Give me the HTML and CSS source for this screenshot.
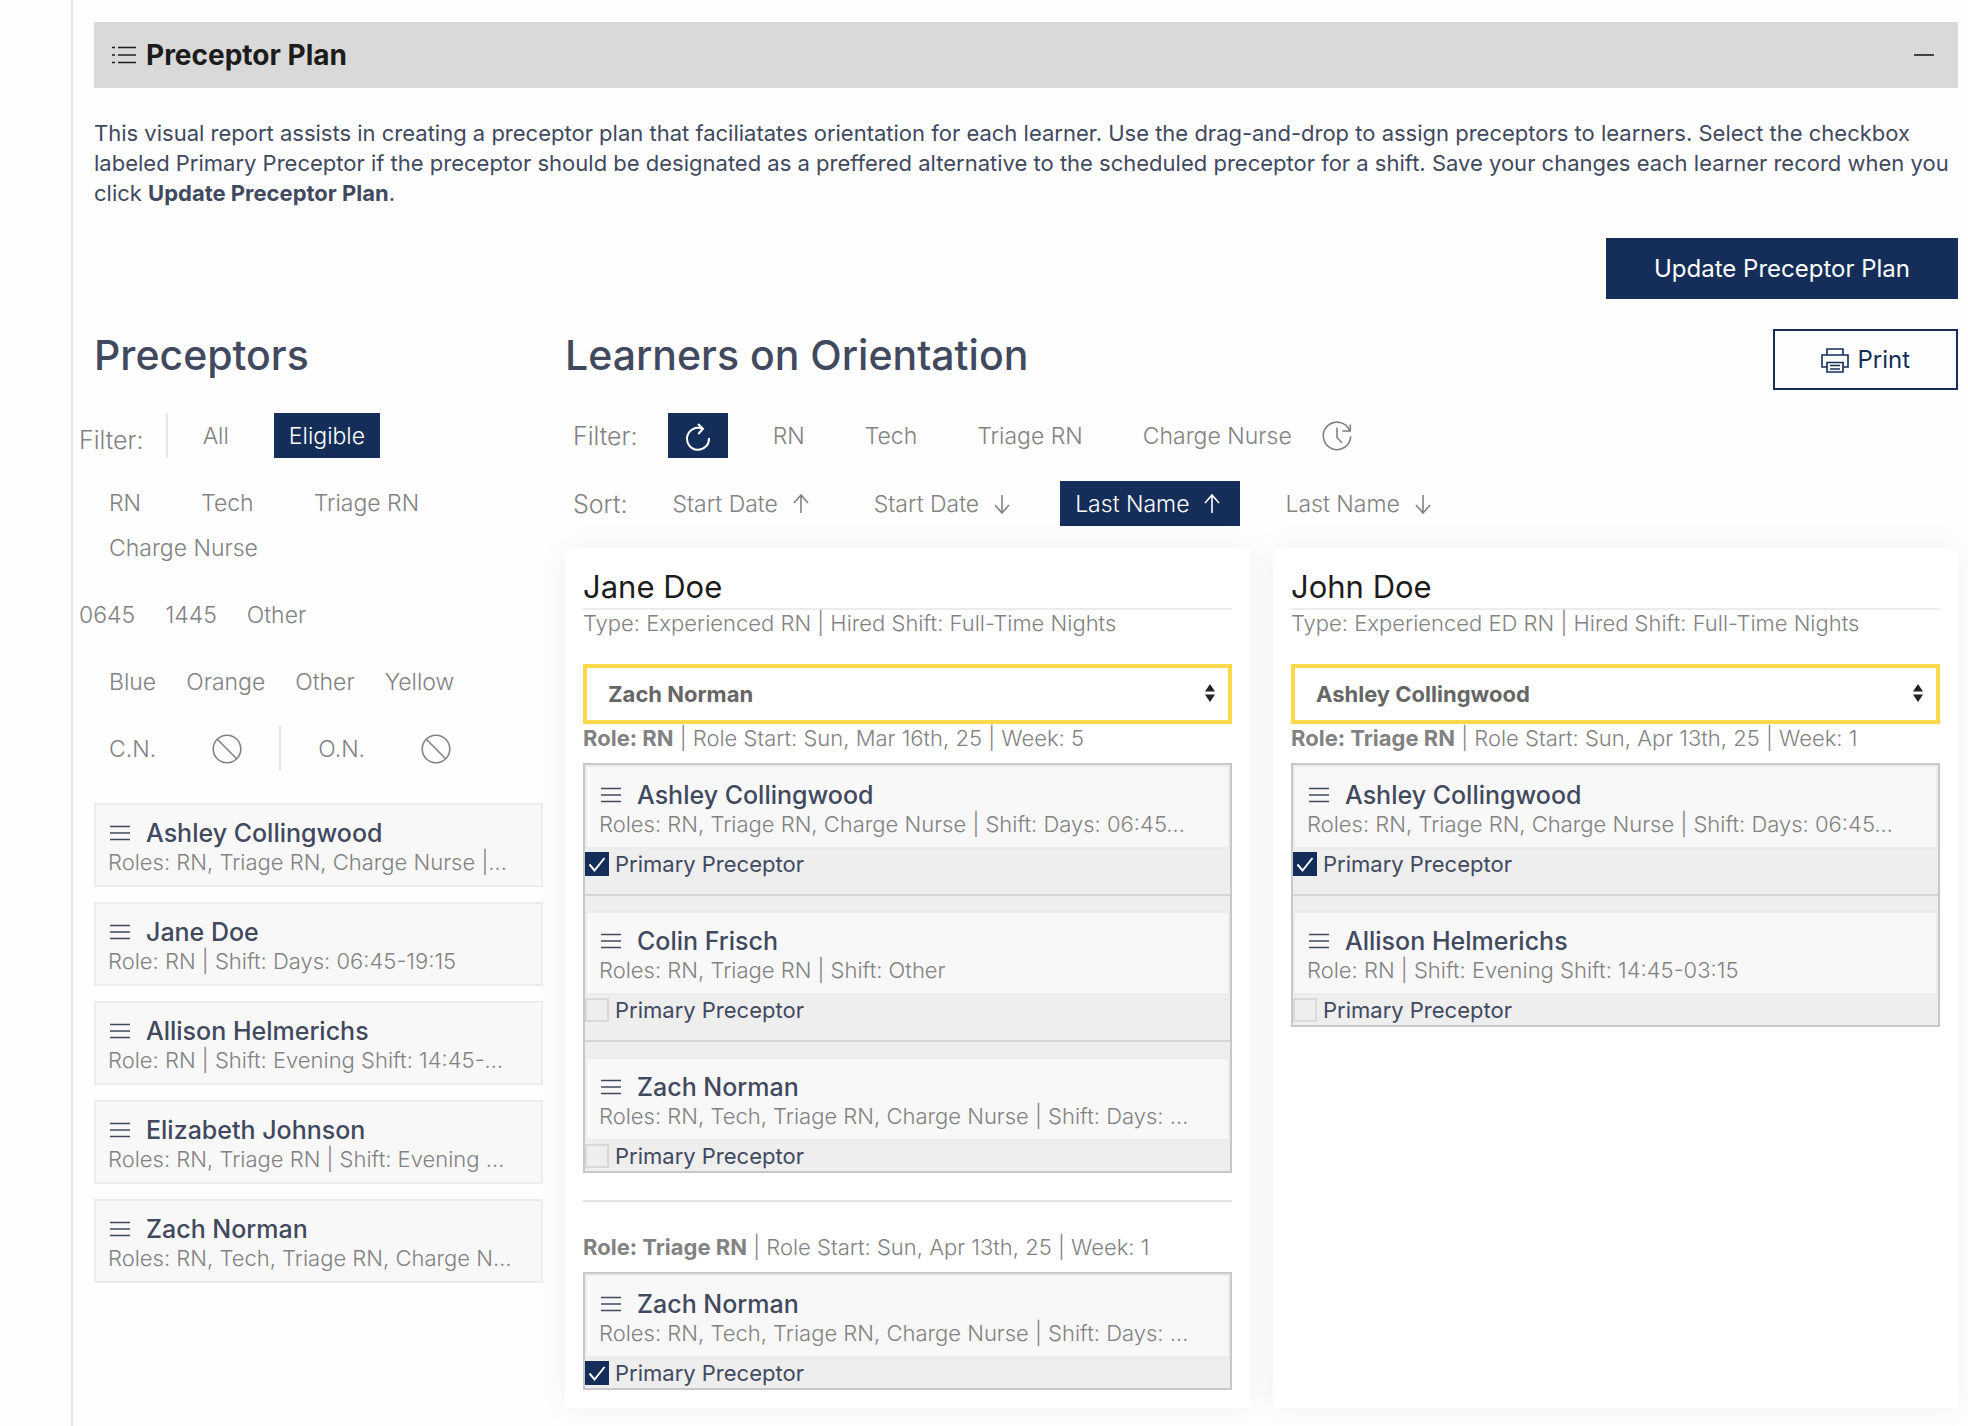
FILE: index.html
```html
<!DOCTYPE html>
<html lang="en">
<head>
<meta charset="utf-8">
<title>Preceptor Plan</title>
<link rel="stylesheet" href="styles.css">
</head>
<body>
<svg class="sprite" aria-hidden="true">
  <symbol id="bars" viewBox="0 0 20 16"><path d="M0 1.5h20M0 8h20M0 14.5h20"/></symbol>
  <symbol id="ban" viewBox="0 0 30 30"><circle cx="15" cy="15" r="13.8"/><path d="M5.3 5.3l19.4 19.4"/></symbol>
  <symbol id="up" viewBox="0 0 26 20"><path d="M13 19V2M6 9l7-8 7 8"/></symbol>
  <symbol id="down" viewBox="0 0 26 20"><path d="M13 1v17M6 11l7 8 7-8"/></symbol>
</svg>
<main class="page">
  <header class="panel-head">
    <h1 class="panel-title">
      <svg class="list-icon" viewBox="0 0 24 18" aria-hidden="true"><path d="M6 1.5h18M6 9h18M6 16.5h18M0 1.5h3M0 9h3M0 16.5h3"/></svg>
      Preceptor Plan
    </h1>
    <button class="collapse" type="button" aria-label="Collapse"><svg viewBox="0 0 20 2" aria-hidden="true"><path d="M0 1h20"/></svg></button>
  </header>

  <p class="intro">This visual report assists in creating a preceptor plan that faciliatates orientation for each learner. Use the drag-and-drop to assign preceptors to learners. Select the checkbox labeled Primary Preceptor if the preceptor should be designated as a preffered alternative to the scheduled preceptor for a shift. Save your changes each learner record when you click <strong>Update Preceptor Plan</strong>.</p>

  <div class="actions"><button class="button solid" type="button">Update Preceptor Plan</button></div>

  <div class="columns">
    <section class="preceptors">
      <h2 class="heading">Preceptors</h2>
      <div class="filters">
        <div class="row spaced">
          <span class="label low">Filter:</span>
          <span class="divider"></span>
          <button class="chip" type="button">All</button>
          <button class="chip active" type="button">Eligible</button>
        </div>
        <div class="row spaced indent">
          <button class="chip" type="button">RN</button>
          <button class="chip" type="button">Tech</button>
          <button class="chip" type="button">Triage RN</button>
          <button class="chip" type="button">Charge Nurse</button>
        </div>
        <div class="row outdent">
          <button class="chip" type="button">0645</button>
          <button class="chip" type="button">1445</button>
          <button class="chip" type="button">Other</button>
        </div>
        <div class="row indent">
          <button class="chip" type="button">Blue</button>
          <button class="chip" type="button">Orange</button>
          <button class="chip" type="button">Other</button>
          <button class="chip" type="button">Yellow</button>
        </div>
        <div class="row flags indent">
          <button class="chip" type="button">C.N.</button>
          <button class="chip" type="button" aria-label="Exclude C.N."><svg class="round-icon"><use href="#ban"/></svg></button>
          <span class="divider mid"></span>
          <button class="chip" type="button">O.N.</button>
          <button class="chip" type="button" aria-label="Exclude O.N."><svg class="round-icon"><use href="#ban"/></svg></button>
        </div>
      </div>
      <ul class="people">
        <li class="person"><h3 class="person-name"><svg class="grip"><use href="#bars"/></svg>Ashley Collingwood</h3><p class="meta">Roles: RN, Triage RN, Charge Nurse |…</p></li>
        <li class="person"><h3 class="person-name"><svg class="grip"><use href="#bars"/></svg>Jane Doe</h3><p class="meta">Role: RN | Shift: Days: 06:45-19:15</p></li>
        <li class="person"><h3 class="person-name"><svg class="grip"><use href="#bars"/></svg>Allison Helmerichs</h3><p class="meta">Role: RN | Shift: Evening Shift: 14:45-…</p></li>
        <li class="person"><h3 class="person-name"><svg class="grip"><use href="#bars"/></svg>Elizabeth Johnson</h3><p class="meta">Roles: RN, Triage RN | Shift: Evening …</p></li>
        <li class="person"><h3 class="person-name"><svg class="grip"><use href="#bars"/></svg>Zach Norman</h3><p class="meta">Roles: RN, Tech, Triage RN, Charge N…</p></li>
      </ul>
    </section>

    <section class="learners">
      <div class="learners-head">
        <h2 class="heading">Learners on Orientation</h2>
        <button class="button outline" type="button">
          <svg class="print-icon" viewBox="0 0 28 26" aria-hidden="true"><path d="M6 8V2h16v6M6 20H1V8h26v12h-5M6 15.500h16V25H6zM9 18.500h10M9 22h10"/></svg>
          Print
        </button>
      </div>
      <div class="row spaced tools">
        <span class="label">Filter:</span>
        <button class="chip active" type="button" aria-label="Reset"><svg class="round-icon bold" viewBox="0 0 30 30" aria-hidden="true"><path d="M19 7.500A11 11 0 1 0 26 17M15 3l5 4.700-4.700 5.300"/></svg></button>
        <button class="chip" type="button">RN</button>
        <button class="chip" type="button">Tech</button>
        <button class="chip" type="button">Triage RN</button>
        <div class="row">
          <button class="chip" type="button">Charge Nurse</button>
          <button class="chip" type="button" aria-label="History"><svg class="round-icon" viewBox="0 0 30 30" aria-hidden="true"><path d="M28.700 15.300A13.700 13.700 0 1 1 27.800 10M28.300 3.500V10h-8M15 6.500v10l5 5.500"/></svg></button>
        </div>
      </div>
      <div class="row spaced tools">
        <span class="label">Sort:</span>
        <button class="chip sort" type="button">Start Date<svg class="arrow"><use href="#up"/></svg></button>
        <button class="chip sort" type="button">Start Date<svg class="arrow"><use href="#down"/></svg></button>
        <button class="chip sort active" type="button">Last Name<svg class="arrow"><use href="#up"/></svg></button>
        <button class="chip sort" type="button">Last Name<svg class="arrow"><use href="#down"/></svg></button>
      </div>

      <div class="cards">
        <article class="card">
          <h3 class="card-title">Jane Doe</h3>
          <p class="meta">Type: Experienced RN | Hired Shift: Full-Time Nights</p>
          <select class="picker" aria-label="Preceptor for Jane Doe"><option>Zach Norman</option></select>
          <p class="meta"><strong>Role: RN</strong> | Role Start: Sun, Mar 16th, 25 | Week: 5</p>
          <ul class="drop">
            <li class="slot"><div class="person"><h4 class="person-name"><svg class="grip"><use href="#bars"/></svg>Ashley Collingwood</h4><p class="meta">Roles: RN, Triage RN, Charge Nurse | Shift: Days: 06:45…</p></div><label class="primary"><input type="checkbox" checked>Primary Preceptor</label></li>
            <li class="slot"><div class="person"><h4 class="person-name"><svg class="grip"><use href="#bars"/></svg>Colin Frisch</h4><p class="meta">Roles: RN, Triage RN | Shift: Other</p></div><label class="primary"><input type="checkbox">Primary Preceptor</label></li>
            <li class="slot"><div class="person"><h4 class="person-name"><svg class="grip"><use href="#bars"/></svg>Zach Norman</h4><p class="meta">Roles: RN, Tech, Triage RN, Charge Nurse | Shift: Days: …</p></div><label class="primary"><input type="checkbox">Primary Preceptor</label></li>
          </ul>
          <hr class="rule">
          <p class="meta"><strong>Role: Triage RN</strong> | Role Start: Sun, Apr 13th, 25 | Week: 1</p>
          <ul class="drop">
            <li class="slot"><div class="person"><h4 class="person-name"><svg class="grip"><use href="#bars"/></svg>Zach Norman</h4><p class="meta">Roles: RN, Tech, Triage RN, Charge Nurse | Shift: Days: …</p></div><label class="primary"><input type="checkbox" checked>Primary Preceptor</label></li>
          </ul>
        </article>
        <article class="card">
          <h3 class="card-title">John Doe</h3>
          <p class="meta">Type: Experienced ED RN | Hired Shift: Full-Time Nights</p>
          <select class="picker" aria-label="Preceptor for John Doe"><option>Ashley Collingwood</option></select>
          <p class="meta"><strong>Role: Triage RN</strong> | Role Start: Sun, Apr 13th, 25 | Week: 1</p>
          <ul class="drop">
            <li class="slot"><div class="person"><h4 class="person-name"><svg class="grip"><use href="#bars"/></svg>Ashley Collingwood</h4><p class="meta">Roles: RN, Triage RN, Charge Nurse | Shift: Days: 06:45…</p></div><label class="primary"><input type="checkbox" checked>Primary Preceptor</label></li>
            <li class="slot"><div class="person"><h4 class="person-name"><svg class="grip"><use href="#bars"/></svg>Allison Helmerichs</h4><p class="meta">Role: RN | Shift: Evening Shift: 14:45-03:15</p></div><label class="primary"><input type="checkbox">Primary Preceptor</label></li>
          </ul>
        </article>
      </div>
    </section>
  </div>
</main>
</body>
</html>
```
FILE: styles.css
```css
:root {
  --navy: #152e59;
  --slate: #41495e;
  --gray: #828282;
  --line: #e6e6e6;
}
* { box-sizing: border-box; }
body {
  margin: 0;
  background: #fefefe;
  color: var(--slate);
  font: 400 22px/30px Inter, "Open Sans", sans-serif;
}
h1, h2, h3, h4, p, ul { margin: 0; padding: 0; }
ul { list-style: none; }
strong { font-weight: 700; }
button, select, input { font: inherit; margin: 0; }
button { cursor: pointer; border: 0; padding: 0; background: none; }
svg { display: block; flex: none; fill: none; stroke: currentColor; stroke-width: 1.6; }
.sprite { display: none; }

.page {
  min-height: 100vh;
  margin-left: 71px;
  padding: 22px 10px 18px 21px;
  border-left: 2px solid var(--line);
}
.panel-head {
  display: flex;
  align-items: center;
  justify-content: space-between;
  height: 66px;
  padding: 0 24px 0 18px;
  background: #d9d9d9;
  color: #1c1c1c;
}
.panel-title { display: flex; align-items: center; gap: 10px; font-size: 28px; font-weight: 700; }
.list-icon { width: 24px; height: 18px; }
.collapse { color: #1c1c1c; }
.collapse svg { width: 20px; height: 2px; }

.intro { margin: 30px 0; }
.actions { display: flex; justify-content: flex-end; margin-bottom: 30px; }
.button {
  display: flex;
  align-items: center;
  justify-content: center;
  gap: 8px;
  height: 61px;
  padding: 0 46px;
  border: 2px solid var(--navy);
  font-size: 24px;
  white-space: nowrap;
}
.solid { background: var(--navy); color: #fff; }
.outline { background: #fefefe; color: var(--navy); }
.print-icon { width: 28px; height: 26px; }

.columns { display: grid; grid-template-columns: 449px minmax(0, 1fr); gap: 22px; }
.heading { height: 61px; font-size: 41px; font-weight: 500; line-height: 52px; }
.learners-head { display: flex; justify-content: space-between; }

.filters { display: grid; gap: 22px; margin: 23px 0 32px -15px; color: var(--gray); }
.row { display: flex; flex-wrap: wrap; align-items: center; }
.spaced { column-gap: 30px; }
.flags { column-gap: 26px; }
.indent { margin-left: 15px; }
.outdent { margin-left: -15px; }
.label { font-size: 25px; font-weight: 300; }
.low { align-self: flex-end; line-height: 36px; }
.divider { width: 2px; height: 45px; margin: 0 -10px 0 -8px; background: var(--line); }
.mid { margin: 0 -4px; }
.chip {
  display: flex;
  align-items: center;
  gap: 10px;
  height: 45px;
  padding: 0 15px;
  color: var(--gray);
  font-size: 23px;
  font-weight: 300;
  white-space: nowrap;
}
.active { background: var(--navy); color: #fff; }
.round-icon { width: 30px; height: 30px; }
.bold { stroke-width: 2; }
.arrow { width: 26px; height: 20px; }
.tools { margin: 23px 0 0 8px; color: var(--gray); }

.people { display: grid; gap: 15px; }
.person {
  height: 84px;
  padding: 13px 12px 0;
  border: 2px solid #ececec;
  background: #f8f8f8;
  overflow: hidden;
}
.person-name { display: flex; align-items: center; gap: 16px; font-size: 25px; font-weight: 500; line-height: 30px; white-space: nowrap; }
.grip { width: 20px; height: 16px; margin-left: 2px; }
.meta { color: var(--gray); font-weight: 300; line-height: 28px; white-space: nowrap; }

.cards { display: grid; grid-template-columns: 1fr 1fr; gap: 23px; margin-top: 22px; }
.card { min-width: 0; padding: 18px; background: #fff; box-shadow: 0 0 30px rgba(0, 0, 0, .06); }
.card-title {
  margin-bottom: -1px;
  border-bottom: 2px solid #ececec;
  color: #1c1c1c;
  font-size: 31px;
  font-weight: 400;
  line-height: 42px;
}
.picker {
  display: block;
  width: 100%;
  height: 60px;
  margin: 27px 0 0;
  padding: 0 21px;
  border: 4px solid #fbd94a;
  border-radius: 0;
  appearance: none;
  color: #666;
  font-weight: 700;
  background: #fff url("data:image/svg+xml,%3Csvg xmlns='http://www.w3.org/2000/svg' width='10' height='18'%3E%3Cpath d='M0 7.500L5 0l5 7.500zM0 10.500h10L5 18z' fill='%23222'/%3E%3C/svg%3E") no-repeat right 13px top 16px;
}
.drop { margin-top: 11px; border: 2px solid #c8c8c8; background: #eee; }
.slot + .slot { margin-top: 15px; padding-top: 15px; border-top: 2px solid #d4d4d4; }
.primary { display: flex; align-items: center; gap: 6px; height: 30px; line-height: 28px; }
.primary input { width: 24px; height: 24px; appearance: none; border: 2px solid #d9d9d9; }
.primary input:checked {
  border-color: var(--navy);
  background: var(--navy) url("data:image/svg+xml,%3Csvg xmlns='http://www.w3.org/2000/svg' width='20' height='20'%3E%3Cpath d='M2.500 10.500l5 6L17.500 4' fill='none' stroke='%23fff' stroke-width='2'/%3E%3C/svg%3E") no-repeat center;
}
.rule { height: 2px; margin: 27px 0 31px; border: 0; background: #e4e4e4; }
```
